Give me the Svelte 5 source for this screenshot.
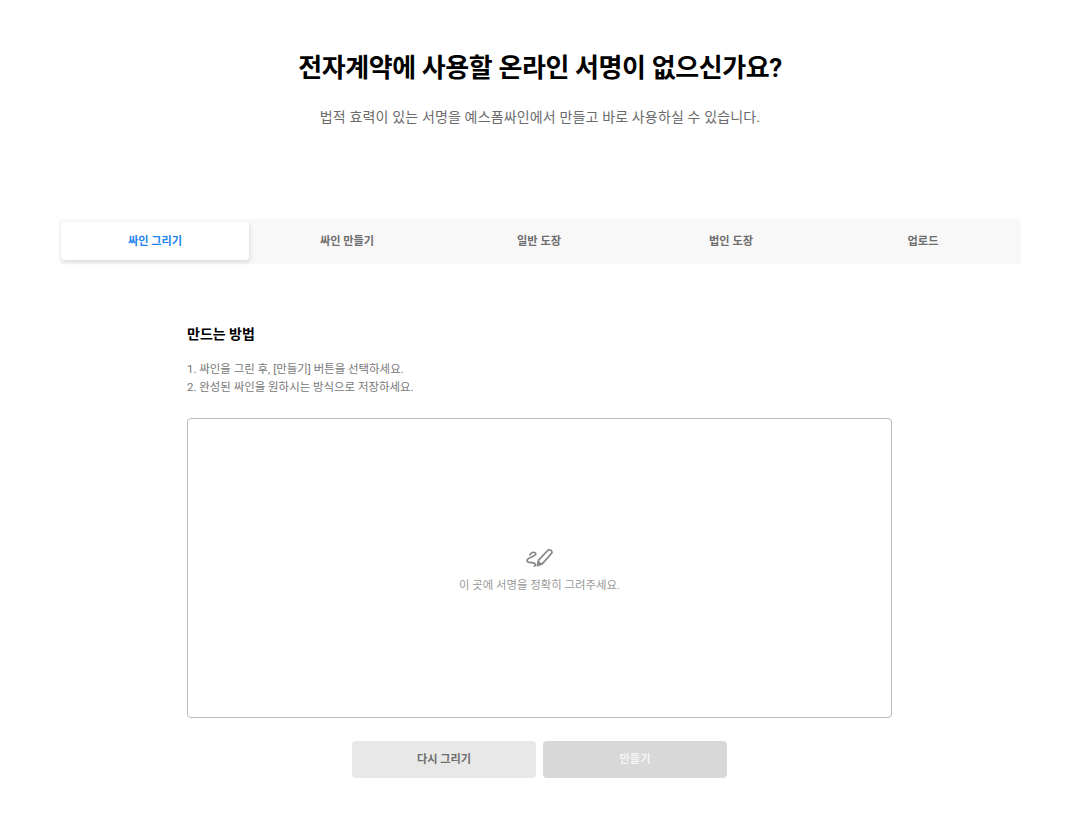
<script>
  const tabs = ["싸인 그리기", "싸인 만들기", "일반 도장", "법인 도장", "업로드"];
  let active = $state(0);
</script>

<main class="page">
  <header class="head">
    <h1>전자계약에 사용할 온라인 서명이 없으신가요?</h1>
    <p>법적 효력이 있는 서명을 예스폼싸인에서 만들고 바로 사용하실 수 있습니다.</p>
  </header>

  <nav class="tabs">
    {#each tabs as tab, i}
      <button class="tab" class:active={active === i} onclick={() => (active = i)}>{tab}</button>
    {/each}
  </nav>

  <section class="body">
    <h2>만드는 방법</h2>
    <ol>
      <li>1. 싸인을 그린 후, [만들기] 버튼을 선택하세요.</li>
      <li>2. 완성된 싸인을 원하시는 방식으로 저장하세요.</li>
    </ol>

    <div class="canvas">
      <svg width="28" height="20" viewBox="0 0 28 20" fill="none" aria-hidden="true">
        <path d="M3.8 6.8C5 4.2 9.6 3.4 9.8 6C10 8.6 1.4 9.4 1 12.4C0.6 15.6 8.8 13.8 9.4 16.2C9.6 17 9.2 17.8 8.4 18.2" stroke="#8a8a8a" stroke-width="1.7" stroke-linecap="round" />
        <path d="M11.4 17.6L12.4 12.4L21.6 2.6C22.5 1.6 24 1.5 25 2.4C26 3.4 26.1 4.9 25.1 5.9L16.2 15.9Z" stroke="#8a8a8a" stroke-width="1.7" stroke-linejoin="round" />
        <path d="M11.4 17.6L12.4 12.4L16.2 15.9Z" fill="#8a8a8a" />
      </svg>
      <span>이 곳에 서명을 정확히 그려주세요.</span>
    </div>

    <div class="actions">
      <button class="btn redo">다시 그리기</button>
      <button class="btn make" disabled>만들기</button>
    </div>
  </section>
</main>

<style>
  :global(body) {
    background: #fff;
  }
  .page {
    font-family: Roboto, "Noto Sans CJK KR", sans-serif;
    padding: 50px 56px 38px 59px;
  }
  .head {
    text-align: center;
    height: 169px;
  }
  h1 {
    margin: 0;
    font-size: 26px;
    line-height: 36px;
    font-weight: 700;
    letter-spacing: -0.4px;
    color: #000;
  }
  .head p {
    margin: 21px 0 0;
    font-size: 14px;
    line-height: 20px;
    letter-spacing: 0.15px;
    color: #6b6b6b;
  }
  .tabs {
    display: grid;
    grid-template-columns: repeat(5, 192px);
    height: 45px;
    box-sizing: border-box;
    padding: 3px 2px 4px 0;
    background: #f8f8f8;
    border-radius: 4px;
  }
  .tab {
    margin-left: 2px;
    margin-right: 2px;
    padding-bottom: 0;
    border: 0;
    background: none;
    border-radius: 4px;
    font: 700 11.2px/16px Roboto, "Noto Sans CJK KR", sans-serif;
    color: #6e6e6e;
    cursor: pointer;
  }
  .tab.active {
    background: #fff;
    color: #1f85eb;
    box-shadow: 1px 2px 4px rgba(0, 0, 0, 0.12);
  }
  .body {
    width: 705px;
    margin: 60px 0 0 128px;
  }
  h2 {
    margin: 0;
    font-size: 14px;
    line-height: 20px;
    font-weight: 700;
    color: #000;
  }
  ol {
    list-style: none;
    margin: 16px 0 0;
    padding: 0;
    font-size: 11.45px;
    line-height: 18px;
    color: #777;
  }
  .canvas {
    box-sizing: border-box;
    height: 300px;
    margin-top: 22px;
    padding-top: 129px;
    border: 1px solid #bbb;
    border-radius: 4px;
    display: flex;
    flex-direction: column;
    align-items: center;
    gap: 9px;
    font-size: 11.4px;
    line-height: 16px;
    color: #999;
  }
  .actions {
    display: flex;
    justify-content: center;
    gap: 7px;
    margin-top: 23px;
  }
  .btn {
    width: 184px;
    height: 37px;
    border: 0;
    border-radius: 4px;
    font: 700 11.2px/16px Roboto, "Noto Sans CJK KR", sans-serif;
  }
  .redo {
    background: #e8e8e8;
    color: #6e6e6e;
  }
  .make {
    background: #d8d8d8;
    color: #f4f4f4;
  }
</style>
